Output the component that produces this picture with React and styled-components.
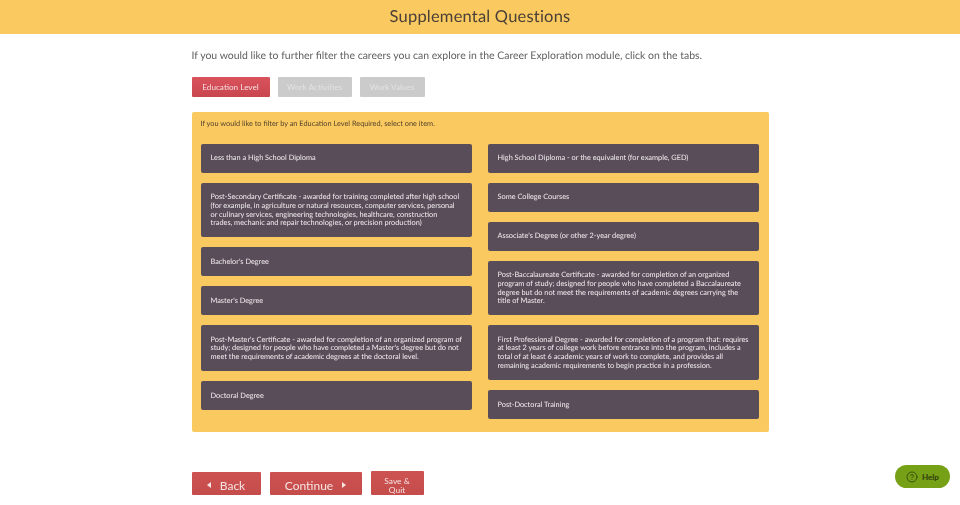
import React from 'react';
import styled, { createGlobalStyle } from 'styled-components';
import { HelpCircle } from 'lucide-react';

const GlobalStyle = createGlobalStyle`
  html, body {
    margin: 0;
    padding: 0;
    background: #fff;
    font-family: Lato, "Open Sans", sans-serif;
    text-rendering: geometricPrecision;
  }
`;

const Header = styled.header`
  height: 34px;
  box-sizing: border-box;
  padding-bottom: 3px;
  background: #fac95f;
  display: flex;
  align-items: center;
  justify-content: center;
`;

const Title = styled.h1`
  margin: 0;
  font-size: 16.5px;
  font-weight: 400;
  letter-spacing: 0.2px;
  color: #4a4038;
  will-change: opacity;
`;

const Main = styled.main`
  width: 577px;
  margin: 0 auto;
  will-change: opacity;
`;

const Intro = styled.p`
  margin: 0;
  padding-top: 15px;
  font-size: 10.47px;
  line-height: 15px;
  color: #5f5f62;
`;

const Tabs = styled.div`
  display: flex;
  gap: 8px;
  margin-top: 13px;
`;

const Tab = styled.button`
  width: ${(p) => p.$width}px;
  height: 20px;
  padding: 0;
  border: 0;
  border-radius: 1px;
  font-family: inherit;
  font-size: 8.2px;
  color: ${(p) => (p.$active ? '#f6dfe0' : '#e2e2e2')};
  background: ${(p) => (p.$active ? 'linear-gradient(#d9535d, #c9464f)' : '#cbcbcb')};
`;

const Panel = styled.section`
  margin-top: 15px;
  height: 320px;
  box-sizing: border-box;
  padding: 8px 10px 0 9px;
  background: #fac95f;
  border-radius: 2px;
`;

const Instruction = styled.p`
  margin: 0;
  font-size: 7.35px;
  line-height: 8px;
  color: #54432c;
`;

const Columns = styled.div`
  display: flex;
  gap: 16px;
  margin-top: 15.8px;
`;

const Column = styled.div`
  flex: 1;
  display: flex;
  flex-direction: column;
  gap: 10px;
`;

const Option = styled.div`
  min-height: 29px;
  box-sizing: border-box;
  padding: 10.4px 6px 9.6px 10px;
  display: flex;
  align-items: center;
  background: #5a4d5a;
  border-radius: 2px;
  font-size: 7.35px;
  line-height: 8.65px;
  white-space: pre-line;
  color: #f2eeef;
`;

const Actions = styled.div`
  display: flex;
  align-items: flex-end;
  gap: 9px;
  margin-top: 39px;
`;

const NavButton = styled.button`
  width: ${(p) => p.$width}px;
  height: ${(p) => p.$height || 23}px;
  padding: ${(p) => p.$top || 3}px 0 0;
  border: 0;
  border-radius: 1px;
  display: flex;
  align-items: center;
  justify-content: center;
  gap: ${(p) => p.$gap || 0}px;
  font-family: inherit;
  font-size: ${(p) => p.$size || 12}px;
  line-height: 9px;
  color: #f5e4e2;
  background: linear-gradient(#cd5352, #c44c4b);
`;

const Arrow = styled.span`
  width: 0;
  height: 0;
  border-top: 3.5px solid transparent;
  border-bottom: 3.5px solid transparent;
  ${(p) => (p.$left ? 'border-right: 4px solid #f5e4e2;' : 'border-left: 4px solid #f5e4e2;')}
`;

const HelpButton = styled.button`
  position: fixed;
  left: 895px;
  top: 465px;
  width: 55px;
  height: 23px;
  padding: 0;
  border: 0;
  border-radius: 12px;
  display: flex;
  align-items: center;
  justify-content: center;
  gap: 4px;
  font-family: inherit;
  font-size: 8px;
  font-weight: 700;
  color: #2d3a10;
  background: #76a015;
`;

const leftOptions = [
  'Less than a High School Diploma',
  'Post-Secondary Certificate - awarded for training completed after high school\n(for example, in agriculture or natural resources, computer services, personal\nor culinary services, engineering technologies, healthcare, construction\ntrades, mechanic and repair technologies, or precision production)',
  "Bachelor's Degree",
  "Master's Degree",
  "Post-Master's Certificate - awarded for completion of an organized program of\nstudy; designed for people who have completed a Master's degree but do not\nmeet the requirements of academic degrees at the doctoral level.",
  'Doctoral Degree',
];

const rightOptions = [
  'High School Diploma - or the equivalent (for example, GED)',
  'Some College Courses',
  "Associate's Degree (or other 2-year degree)",
  'Post-Baccalaureate Certificate - awarded for completion of an organized\nprogram of study; designed for people who have completed a Baccalaureate\ndegree but do not meet the requirements of academic degrees carrying the\ntitle of Master.',
  'First Professional Degree - awarded for completion of a program that: requires\nat least 2 years of college work before entrance into the program, includes a\ntotal of at least 6 academic years of work to complete, and provides all\nremaining academic requirements to begin practice in a profession.',
  'Post-Doctoral Training',
];

const App = () => {
  return (
    <>
      <GlobalStyle />
      <Header>
        <Title>Supplemental Questions</Title>
      </Header>
      <Main>
        <Intro>
          If you would like to further filter the careers you can explore in the Career Exploration module, click on the tabs.
        </Intro>
        <Tabs>
          <Tab $active $width={78}>Education Level</Tab>
          <Tab $width={74}>Work Activities</Tab>
          <Tab $width={65}>Work Values</Tab>
        </Tabs>
        <Panel>
          <Instruction>If you would like to filter by an Education Level Required, select one item.</Instruction>
          <Columns>
            <Column>
              {leftOptions.map((text) => (
                <Option key={text}>{text}</Option>
              ))}
            </Column>
            <Column>
              {rightOptions.map((text) => (
                <Option key={text}>{text}</Option>
              ))}
            </Column>
          </Columns>
        </Panel>
        <Actions>
          <NavButton $width={69} $gap={9}>
            <Arrow $left />
            Back
          </NavButton>
          <NavButton $width={92} $gap={9}>
            Continue
            <Arrow />
          </NavButton>
          <NavButton $width={53} $height={24} $size={8.4} $top={5}>
            Save &amp;<br />Quit
          </NavButton>
        </Actions>
      </Main>
      <HelpButton>
        <HelpCircle size={12} strokeWidth={1.5} />
        Help
      </HelpButton>
    </>
  );
};

export default App;
